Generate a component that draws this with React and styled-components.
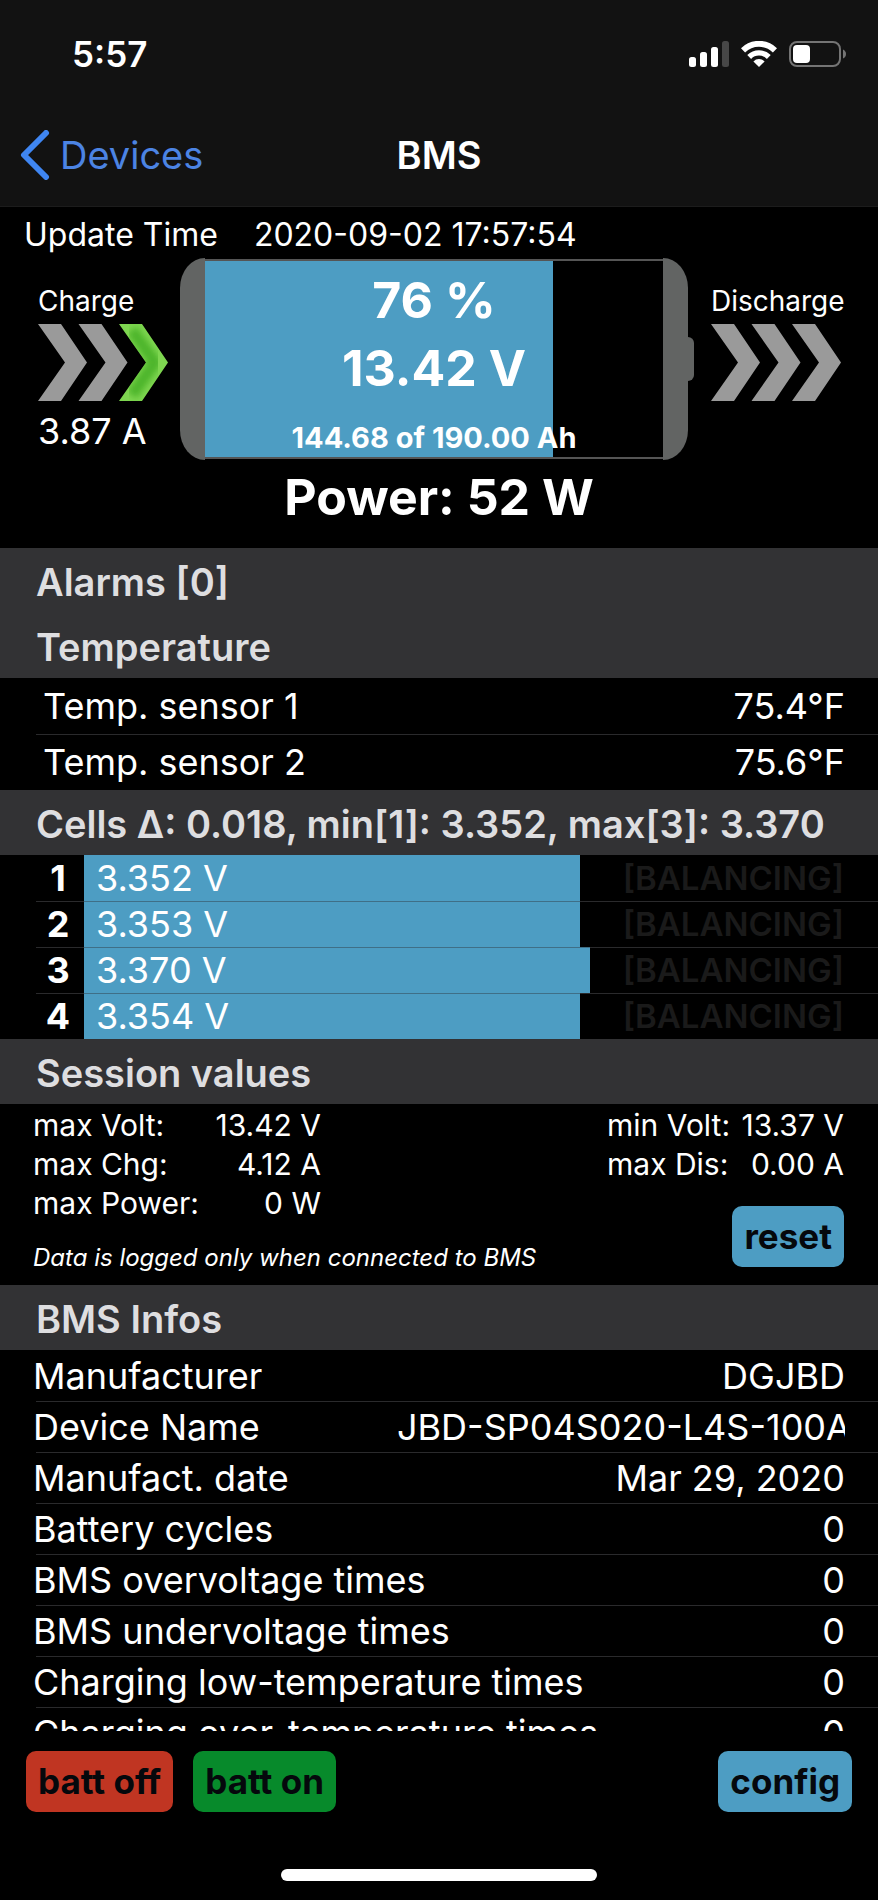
import React from 'react';
import styled, { createGlobalStyle } from 'styled-components';

const BLUE = '#4d9dc3';

const GlobalStyle = createGlobalStyle`
  * { box-sizing: border-box; }
  html, body { margin: 0; background: #000; }
  body { font-family: Inter, "Liberation Sans", sans-serif; color: #fff; }
  h1, h2, p, dl, dd { margin: 0; }
  table { border-collapse: collapse; table-layout: fixed; width: 100%; }
  td, th { padding: 0; font-weight: 400; text-align: left; white-space: nowrap; }
`;

const Screen = styled.div`
  display: flex;
  flex-direction: column;
  height: 100vh;
  overflow: hidden;
`;

const TopBar = styled.header`
  flex: none;
  background: #121212;
  border-bottom: 1px solid #1c1c1c;
`;

const StatusBar = styled.div`
  display: flex;
  justify-content: space-between;
  align-items: center;
  height: 108px;
  padding: 0 32px 0 72px;
  font-size: 35px;
  font-weight: 600;
`;

const StatusIcons = styled.div`
  display: flex;
  align-items: center;
  gap: 12px;
`;

const NavBar = styled.nav`
  display: grid;
  grid-template-columns: 1fr auto 1fr;
  align-items: center;
  height: 98px;
  padding: 0 20px 4px;
`;

const BackLink = styled.a`
  display: flex;
  align-items: center;
  gap: 10px;
  color: #4c84e4;
  font-size: 38px;
  text-decoration: none;
`;

const PageTitle = styled.h1`
  font-size: 38px;
  font-weight: 600;
`;

const Summary = styled.section`
  flex: none;
  height: 341px;
  padding-top: 8px;
`;

const UpdateTime = styled.p`
  display: flex;
  gap: 36px;
  padding-left: 24px;
  font-size: 32px;
  line-height: 40px;
`;

const Gauges = styled.div`
  display: grid;
  grid-template-columns: 142px 1fr 130px;
  padding: 3px 37px 0 38px;
`;

const Flow = styled.div`
  padding-top: 28px;
  font-size: 28px;
  line-height: 30px;
  white-space: nowrap;

  svg {
    display: block;
    margin: 8px 0 12px;
  }
`;

const Amps = styled.p`
  font-size: 36px;
  line-height: 36px;
`;

const Battery = styled.div`
  display: flex;
  align-items: center;
  height: 202px;
  margin-right: 17px;
`;

const BatteryCap = styled.div`
  flex: none;
  width: 25px;
  height: 202px;
  background: #626463;
  border-radius: ${(props) => (props.$right ? '0 25px 25px 0 / 0 30px 30px 0' : '25px 0 0 25px / 30px 0 0 30px')};
`;

const BatteryTip = styled.div`
  flex: none;
  width: 6px;
  height: 44px;
  background: #626463;
  border-radius: 0 6px 6px 0;
`;

const BatteryBody = styled.div`
  flex: 1;
  display: flex;
  flex-direction: column;
  align-items: center;
  height: 200px;
  padding-top: 5px;
  border: solid #555;
  border-width: 2px 0;
  font-size: 50px;
  font-weight: 700;
  line-height: 68px;
  white-space: nowrap;
`;

const Capacity = styled.span`
  font-size: 29px;
  font-weight: 700;
  line-height: 72px;
`;

const Power = styled.p`
  font-size: 50px;
  font-weight: 700;
  line-height: 74px;
  text-align: center;
`;

const SectionTitle = styled.h2`
  flex: none;
  height: 65px;
  padding-left: 36px;
  background: #323234;
  color: #dedee0;
  font-size: 38px;
  font-weight: 600;
  line-height: 68px;
  white-space: nowrap;
`;

// separator starts at the inset, not at the screen edge
const Row = styled.tr`
  height: ${(props) => props.$height}px;
  font-size: 36px;

  & + & {
    background: linear-gradient(#2a2a2c, #2a2a2c) 36px 0 / 100% 1px no-repeat;
  }
`;

// long labels may run past the column, their values are short
const Label = styled.th`
  && {
    width: 42%;
    padding-left: ${(props) => props.$inset}px;
  }
`;

const Value = styled.td`
  && {
    padding-right: 33px;
    text-align: right;
  }
`;

const Clipped = styled.div`
  width: 448px;
  margin-left: auto;
  overflow: hidden;
  text-align: left;
`;

const CellNumber = styled.th`
  && {
    width: 84px;
    padding-left: 32px;
    font-weight: 700;
    text-align: center;
  }
`;

const CellTrack = styled.div`
  display: flex;
  justify-content: space-between;
  align-items: center;
  height: 46px;
  padding: 0 34px 1px 12px;
  border-top: 1px solid transparent;

  ${Row} + ${Row} & { border-top-color: rgba(42, 42, 44, 0.4); }
`;

const Balancing = styled.span`
  color: #1a1a1a;
  font-size: 33px;
  font-weight: 600;
`;

const Session = styled.section`
  flex: none;
  display: flex;
  justify-content: space-between;
  height: 181px;
  padding: 2px 34px 0 33px;
`;

const SessionColumn = styled.div`
  display: flex;
  flex-direction: column;
  justify-content: space-between;
`;

const Stats = styled.dl`
  display: grid;
  grid-template-columns: auto auto;
  justify-content: space-between;
  width: ${(props) => props.$width}px;
  font-size: 30px;
  line-height: 39px;

  dd { text-align: right; }
`;

const Note = styled.p`
  padding-bottom: 12px;
  font-size: 24px;
  font-style: italic;
  line-height: 30px;
  white-space: nowrap;
`;

const ActionButton = styled.button`
  height: 61px;
  padding: 0 12px 2px;
  border: 0;
  border-radius: 10px;
  background: ${(props) => props.$color};
  color: #05080c;
  font-family: inherit;
  font-size: 35px;
  font-weight: 700;
  font-variant-ligatures: none;
  white-space: nowrap;
`;

const ResetButton = styled(ActionButton)`
  align-self: end;
  margin-bottom: 18px;
`;

const InfoList = styled.div`
  flex: 1;
  min-height: 0;
  overflow: hidden;
`;

const ActionBar = styled.footer`
  flex: none;
  display: flex;
  gap: 20px;
  padding: 20px 26px 0;

  button:last-child { margin-left: auto; }
`;

const HomeIndicator = styled.div`
  flex: none;
  width: 36%;
  height: 12px;
  margin: 57px auto 19px;
  border-radius: 6px;
  background: #fff;
`;

const sensors = [
  ['Temp. sensor 1', '75.4°F'],
  ['Temp. sensor 2', '75.6°F'],
];

const cells = [
  { id: 1, volt: '3.352 V', level: 62.5 },
  { id: 2, volt: '3.353 V', level: 62.5 },
  { id: 3, volt: '3.370 V', level: 63.7 },
  { id: 4, volt: '3.354 V', level: 62.5 },
];

const infos = [
  ['Manufacturer', 'DGJBD'],
  ['Device Name', 'JBD-SP04S020-L4S-100A'],
  ['Manufact. date', 'Mar 29, 2020'],
  ['Battery cycles', '0'],
  ['BMS overvoltage times', '0'],
  ['BMS undervoltage times', '0'],
  ['Charging low-temperature times', '0'],
  ['Charging over-temperature times', '0'],
];

const fill = (percent) => ({
  backgroundImage: `linear-gradient(to right, ${BLUE} ${percent}%, transparent ${percent}%)`,
});

function Arrows({ active }) {
  return (
    <svg width="130" height="77" viewBox="0 0 130 77" aria-hidden="true">
      <defs>
        <filter id="soft"><feGaussianBlur stdDeviation="3" /></filter>
        <clipPath id="arrow"><path d="M0 0H23L49 38.5L23 77H0L27 38.5Z" /></clipPath>
      </defs>
      {[0, 1, 2].map((i) => (
        <g key={i} transform={`translate(${i * 40.5} 0)`}>
          <path d="M0 0H23L49 38.5L23 77H0L27 38.5Z" fill={active === i ? '#7ed650' : '#9a9a9a'} />
          {active === i && (
            <g clipPath="url(#arrow)">
              <path d="M13 6L36 38.5L13 71" fill="none" stroke="#4db52c" strokeWidth="12" filter="url(#soft)" />
            </g>
          )}
        </g>
      ))}
    </svg>
  );
}

function App() {
  return (
    <Screen>
      <GlobalStyle />
      <TopBar>
        <StatusBar>
          <span>5:57</span>
          <StatusIcons>
            <svg width="40" height="26" viewBox="0 0 40 26" fill="#fff" aria-hidden="true">
              <rect x="0" y="16" width="7" height="10" rx="2.5" />
              <rect x="11" y="11" width="7" height="15" rx="2.5" />
              <rect x="22" y="6" width="7" height="20" rx="2.5" />
              <rect x="33" y="0" width="7" height="26" rx="2.5" fill="#474747" />
            </svg>
            <svg width="36" height="26" viewBox="0 0 36 26" fill="none" stroke="#fff" aria-hidden="true">
              <path d="M2 9.4A22.8 22.8 0 0 1 34 9.4" strokeWidth="6" />
              <path d="M8.2 16A13.8 13.8 0 0 1 27.8 16" strokeWidth="5.4" />
              <path d="M18 26L12.4 20.4A7.9 7.9 0 0 1 23.6 20.4Z" fill="#fff" stroke="none" />
            </svg>
            <svg width="57" height="26" viewBox="0 0 57 26" aria-hidden="true">
              <rect x="1" y="1" width="50" height="24" rx="7" fill="none" stroke="#747474" strokeWidth="2" />
              <rect x="4" y="4" width="17" height="18" rx="4" fill="#fff" />
              <path d="M54 8.5Q57 10 57 13T54 17.5Z" fill="#747474" />
            </svg>
          </StatusIcons>
        </StatusBar>
        <NavBar>
          <BackLink href="#devices">
            <svg width="30" height="50" viewBox="0 0 30 50" fill="none" aria-hidden="true">
              <path d="M26 3L4 25L26 47" stroke="#3f86f2" strokeWidth="6" strokeLinecap="round" strokeLinejoin="round" />
            </svg>
            Devices
          </BackLink>
          <PageTitle>BMS</PageTitle>
        </NavBar>
      </TopBar>

      <Summary>
        <UpdateTime>
          <span>Update Time</span>
          <time>2020-09-02 17:57:54</time>
        </UpdateTime>
        <Gauges>
          <Flow>
            <p>Charge</p>
            <Arrows active={2} />
            <Amps>3.87 A</Amps>
          </Flow>
          <Battery>
            <BatteryCap />
            <BatteryBody style={fill(76)}>
              <span>76 %</span>
              <span>13.42 V</span>
              <Capacity>144.68 of 190.00 Ah</Capacity>
            </BatteryBody>
            <BatteryCap $right />
            <BatteryTip />
          </Battery>
          <Flow>
            <p>Discharge</p>
            <Arrows />
          </Flow>
        </Gauges>
        <Power>Power: 52 W</Power>
      </Summary>

      <SectionTitle>Alarms [0]</SectionTitle>
      <SectionTitle>Temperature</SectionTitle>
      <table>
        <tbody>
          {sensors.map(([name, temp]) => (
            <Row key={name} $height={56}>
              <Label scope="row" $inset={43}>{name}</Label>
              <Value>{temp}</Value>
            </Row>
          ))}
        </tbody>
      </table>

      <SectionTitle>Cells Δ: 0.018, min[1]: 3.352, max[3]: 3.370</SectionTitle>
      <table>
        <tbody>
          {cells.map((cell) => (
            <Row key={cell.id} $height={46}>
              <CellNumber scope="row">{cell.id}</CellNumber>
              <td>
                <CellTrack style={fill(cell.level)}>
                  {cell.volt}
                  <Balancing>[BALANCING]</Balancing>
                </CellTrack>
              </td>
            </Row>
          ))}
        </tbody>
      </table>

      <SectionTitle>Session values</SectionTitle>
      <Session>
        <SessionColumn>
          <Stats $width={288}>
            <dt>max Volt:</dt>
            <dd>13.42 V</dd>
            <dt>max Chg:</dt>
            <dd>4.12 A</dd>
            <dt>max Power:</dt>
            <dd>0 W</dd>
          </Stats>
          <Note>Data is logged only when connected to BMS</Note>
        </SessionColumn>
        <SessionColumn>
          <Stats $width={237}>
            <dt>min Volt:</dt>
            <dd>13.37 V</dd>
            <dt>max Dis:</dt>
            <dd>0.00 A</dd>
          </Stats>
          <ResetButton type="button" $color={BLUE}>reset</ResetButton>
        </SessionColumn>
      </Session>

      <SectionTitle>BMS Infos</SectionTitle>
      <InfoList>
        <table>
          <tbody>
            {infos.map(([name, value]) => (
              <Row key={name} $height={51}>
                <Label scope="row" $inset={33}>{name}</Label>
                <Value>{value.length > 20 ? <Clipped>{value}</Clipped> : value}</Value>
              </Row>
            ))}
          </tbody>
        </table>
      </InfoList>

      <ActionBar>
        <ActionButton type="button" $color="#c03522">batt off</ActionButton>
        <ActionButton type="button" $color="#078a2b">batt on</ActionButton>
        <ActionButton type="button" $color={BLUE}>config</ActionButton>
      </ActionBar>
      <HomeIndicator />
    </Screen>
  );
}

export default App;
